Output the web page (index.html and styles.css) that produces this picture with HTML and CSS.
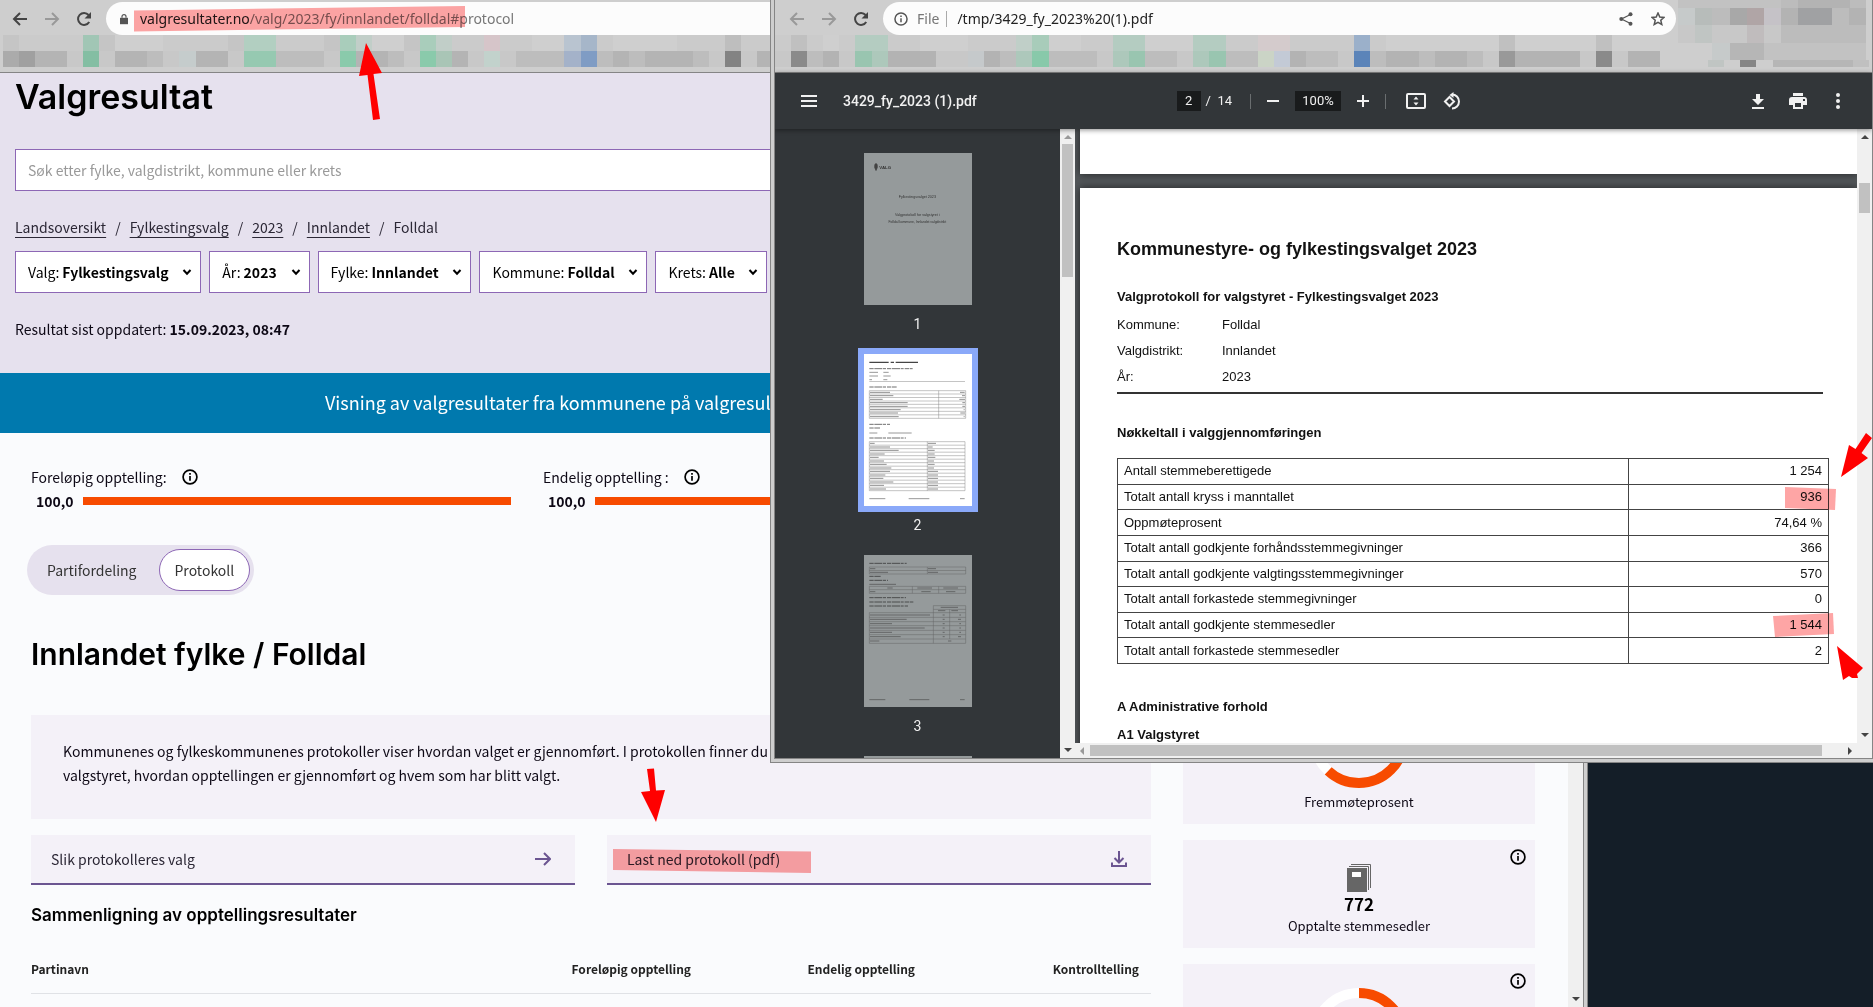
FILE: index.html
```html
<!DOCTYPE html>
<html lang="no">
<head>
<meta charset="utf-8">
<title>Valgresultat</title>
<link rel="stylesheet" href="styles.css">
</head>
<body>
<svg class="defs" width="0" height="0" aria-hidden="true">
  <symbol id="i-back" viewBox="0 0 16 16"><path d="M15 8H2M8 2L2 8l6 6" fill="none" stroke="currentColor" stroke-width="2"/></symbol>
  <symbol id="i-fwd" viewBox="0 0 16 16"><path d="M1 8h13M8 2l6 6-6 6" fill="none" stroke="currentColor" stroke-width="2"/></symbol>
  <symbol id="i-reload" viewBox="0 0 16 16"><path d="M13.2 11A6 6 0 1 1 12.6 4" fill="none" stroke="currentColor" stroke-width="2"/><path d="M15 1v6.5H8.500z" fill="currentColor"/></symbol>
  <symbol id="i-info" viewBox="0 0 16 16"><circle cx="8" cy="8" r="6.900" fill="none" stroke="currentColor" stroke-width="1.700"/><path d="M8 7v4.800M8 4v1.800" stroke="currentColor" stroke-width="1.700"/></symbol>
  <symbol id="i-chev" viewBox="0 0 10 8"><path d="M1.500 2L5 5.800 8.500 2" fill="none" stroke="currentColor" stroke-width="2"/></symbol>
  <symbol id="i-up" viewBox="0 0 8 4"><path d="M0 4l4-4 4 4z" fill="currentColor"/></symbol>
  <symbol id="i-down" viewBox="0 0 8 4"><path d="M0 0l4 4 4-4z" fill="currentColor"/></symbol>
  <symbol id="i-left" viewBox="0 0 4 8"><path d="M4 0L0 4l4 4z" fill="currentColor"/></symbol>
  <symbol id="i-right" viewBox="0 0 4 8"><path d="M0 0l4 4-4 4z" fill="currentColor"/></symbol>
</svg>

<div class="desktop">
  <section class="window window-main" aria-label="Valgresultat">
    <div class="window-inner">
      <div class="chrome">
        <div class="nav">
          <button class="nav-btn" aria-label="Tilbake"><svg><use href="#i-back"/></svg></button>
          <button class="nav-btn dim" aria-label="Frem"><svg><use href="#i-fwd"/></svg></button>
          <button class="nav-btn" aria-label="Last inn"><svg><use href="#i-reload"/></svg></button>
          <div class="url">
            <svg class="lock" viewBox="0 0 10 13"><path d="M0 5h10v8H0z" fill="#555"/><path d="M2.500 5V3.500a2.500 2.500 0 0 1 5 0V5" fill="none" stroke="#555" stroke-width="1.500"/></svg>
            <span class="url-text"><span class="host">valgresultater.no</span>/valg/2023/fy/innlandet/folldal#protocol</span>
          </div>
        </div>
        <svg class="strip strip-main" viewBox="0 0 48 2" preserveAspectRatio="none" shape-rendering="crispEdges" aria-hidden="true">
          <path fill="#cbcbcb" d="M0 0h48v1H0z"/><path fill="#bdbdbd" d="M0 1h48v1H0z"/>
          <path fill="#c5c5c5" d="M0 0h1v1H0zM6 0h1v1H6zM14 0h1v1h-1zM20 0h1v1h-1zM25 0h1v1h-1z"/>
          <path fill="#cfcfcf" d="M7 0h3v1H7zM23 0h2v1h-2zM33 0h2v1h-2zM38 0h4v1h-4z"/>
          <path fill="#a1c6b5" d="M5 0h1v1H5z"/><path fill="#b2cfc1" d="M15 0h2v1h-2z"/><path fill="#a9cdbb" d="M21 0h1v1h-1zM26 0h1v1h-1z"/><path fill="#c1cec8" d="M22 0h1v1h-1zM27 0h1v1h-1z"/>
          <path fill="#d6c5c9" d="M30 0h1v1h-1z"/><path fill="#b9c4d0" d="M35 0h1v1h-1z"/><path fill="#a6b6c9" d="M36 0h1v1h-1z"/><path fill="#bebebe" d="M45 0h1v1h-1z"/>
          <path fill="#ababab" d="M0 1h1v1H0z"/><path fill="#a0a0a0" d="M1 1h1v1H1z"/>
          <path fill="#b4b4b4" d="M2 1h2v1H2zM7 1h2v1H7zM12 1h2v1h-2zM22 1h2v1h-2zM28 1h1v1h-1zM38 1h1v1h-1zM40 1h3v1h-3zM47 1h1v1h-1z"/>
          <path fill="#c8c8c8" d="M4 1h1v1H4zM6 1h1v1H6zM10 1h1v1h-1zM14 1h1v1h-1zM20 1h1v1h-1zM25 1h1v1h-1zM29 1h1v1h-1zM31 1h1v1h-1zM44 1h1v1h-1zM46 1h1v1h-1z"/>
          <path fill="#84bea3" d="M5 1h1v1H5z"/><path fill="#c5cccc" d="M11 1h1v1h-1z"/><path fill="#96c9b1" d="M15 1h2v1h-2z"/><path fill="#8acaab" d="M21 1h1v1h-1zM26 1h1v1h-1z"/><path fill="#a9c5b6" d="M27 1h1v1h-1z"/><path fill="#c2d2cc" d="M30 1h1v1h-1z"/>
          <path fill="#a4b2c9" d="M35 1h1v1h-1z"/><path fill="#7f9cc4" d="M36 1h1v1h-1z"/><path fill="#838383" d="M45 1h1v1h-1z"/>
        </svg>
      </div>
      <div class="viewport">
        <div class="page">
          <header class="hero">
            <h1>Valgresultat</h1>
            <input class="search" type="search" aria-label="Søk" placeholder="Søk etter fylke, valgdistrikt, kommune eller krets">
            <nav class="crumbs" aria-label="Brødsmuler">
              <a href="#">Landsoversikt</a><span>/</span><a href="#">Fylkestingsvalg</a><span>/</span><a href="#">2023</a><span>/</span><a href="#">Innlandet</a><span>/</span><span>Folldal</span>
            </nav>
            <div class="filters">
              <label class="filter">Valg:<select><option>Fylkestingsvalg</option></select><svg><use href="#i-chev"/></svg></label>
              <label class="filter">År:<select><option>2023</option></select><svg><use href="#i-chev"/></svg></label>
              <label class="filter">Fylke:<select><option>Innlandet</option></select><svg><use href="#i-chev"/></svg></label>
              <label class="filter">Kommune:<select><option>Folldal</option></select><svg><use href="#i-chev"/></svg></label>
              <label class="filter">Krets:<select><option>Alle</option></select><svg><use href="#i-chev"/></svg></label>
            </div>
            <p class="updated">Resultat sist oppdatert: <b>15.09.2023, 08:47</b></p>
          </header>
          <div class="banner">Visning av valgresultater fra kommunene på valgresultater.no</div>
          <main class="main">
            <div class="progress-row">
              <div class="progress"><div class="progress-label">Foreløpig opptelling: <svg class="info"><use href="#i-info"/></svg></div><div class="progress-line"><b>100,0</b><div class="bar"></div></div></div>
              <div class="progress"><div class="progress-label">Endelig opptelling : <svg class="info"><use href="#i-info"/></svg></div><div class="progress-line"><b>100,0</b><div class="bar"></div></div></div>
            </div>
            <div class="columns">
              <div class="content">
                <div class="tabs"><button class="tab">Partifordeling</button><button class="tab active">Protokoll</button></div>
                <h2>Innlandet fylke / Folldal</h2>
                <p class="intro">Kommunenes og fylkeskommunenes protokoller viser hvordan valget er gjennomført. I protokollen finner du<br>valgstyret, hvordan opptellingen er gjennomført og hvem som har blitt valgt.</p>
                <div class="links">
                  <a class="link-card" href="#">Slik protokolleres valg<svg viewBox="0 0 16 16"><path d="M0 8h14M9 2l6 6-6 6" fill="none" stroke="#6b5591" stroke-width="2"/></svg></a>
                  <a class="link-card" href="#">Last ned protokoll (pdf)<svg viewBox="0 0 16 16"><path d="M8 0v11M3.500 7L8 11.500 12.500 7M1 11.500V15h14v-3.500" fill="none" stroke="#6b5591" stroke-width="2"/></svg></a>
                </div>
                <h3>Sammenligning av opptellingsresultater</h3>
                <table class="results">
                  <thead><tr><th>Partinavn</th><th>Foreløpig opptelling</th><th>Endelig opptelling</th><th>Kontrolltelling</th></tr></thead>
                </table>
              </div>
              <aside class="cards">
                <div class="card">
                  <svg class="donut" viewBox="0 0 100 100"><circle cx="50" cy="50" r="45" fill="none" stroke="#fff" stroke-width="10"/><circle cx="50" cy="50" r="45" fill="none" stroke="#f74b00" stroke-width="10" pathLength="100" stroke-dasharray="62 38" transform="rotate(-90 50 50)"/></svg>
                  <span class="card-label spaced">Fremmøteprosent</span>
                </div>
                <div class="card">
                  <svg class="info corner"><use href="#i-info"/></svg>
                  <svg class="books" viewBox="0 0 24 28"><path d="M4 .5h19.500V24M2 2.500h19.500V26" fill="none" stroke="#666"/><path d="M0 4h20v24H0z" fill="#666"/><path d="M5 8h9v5H5z" fill="#fff"/></svg>
                  <b class="card-number">772</b>
                  <span class="card-label">Opptalte stemmesedler</span>
                </div>
                <div class="card">
                  <svg class="info corner"><use href="#i-info"/></svg>
                  <svg class="donut" viewBox="0 0 100 100"><circle cx="50" cy="50" r="45" fill="none" stroke="#fff" stroke-width="10"/><circle cx="50" cy="50" r="45" fill="none" stroke="#f74b00" stroke-width="10" pathLength="100" stroke-dasharray="62 38" transform="rotate(-90 50 50)"/></svg>
                </div>
              </aside>
            </div>
          </main>
        </div>
        <div class="vbar vbar-main"><svg class="tri"><use href="#i-down"/></svg></div>
      </div>
    </div>
  </section>

  <section class="window window-pdf" aria-label="PDF">
    <div class="window-inner">
      <div class="chrome chrome-pdf">
        <div class="chrome-left">
          <div class="nav">
            <button class="nav-btn dim" aria-label="Tilbake"><svg><use href="#i-back"/></svg></button>
            <button class="nav-btn dim" aria-label="Frem"><svg><use href="#i-fwd"/></svg></button>
            <button class="nav-btn" aria-label="Last inn"><svg><use href="#i-reload"/></svg></button>
            <div class="url url-pdf">
              <svg class="url-info"><use href="#i-info"/></svg><span class="scheme">File</span><span class="host">/tmp/3429_fy_2023%20(1).pdf</span>
              <span class="url-actions">
                <svg viewBox="0 0 14 14"><path d="M11.500 2.500L2.500 7l9 4.500" fill="none" stroke="#555" stroke-width="1.300"/><circle cx="11.500" cy="2.200" r="2" fill="#555"/><circle cx="2.300" cy="7" r="2" fill="#555"/><circle cx="11.500" cy="11.800" r="2" fill="#555"/></svg>
                <svg viewBox="0 0 14 14"><path d="M7 1l1.800 4 4.200.4-3.200 2.900 1 4.200L7 10.300l-3.800 2.200 1-4.200L1 5.400 5.200 5z" fill="none" stroke="#555" stroke-width="1.500"/></svg>
              </span>
            </div>
          </div>
          <svg class="strip strip-pdf" viewBox="0 0 55 2" preserveAspectRatio="none" shape-rendering="crispEdges" aria-hidden="true">
            <path fill="#cbcbcb" d="M0 0h55v1H0z"/><path fill="#bdbdbd" d="M0 1h55v1H0z"/>
            <path fill="#cfcfcf" d="M3 0h1v1H3zM9 0h3v1H9zM17 0h2v1h-2zM23 0h3v1h-3zM38 0h7v1h-7zM46 0h5v1h-5zM52 0h3v1h-3z"/>
            <path fill="#c0c0c0" d="M1 0h1v1H1zM45 0h1v1h-1zM51 0h1v1h-1z"/>
            <path fill="#b4ccc1" d="M5 0h2v1H5zM21 0h2v1h-2zM26 0h2v1h-2z"/><path fill="#c0cfc8" d="M15 0h1v1h-1z"/><path fill="#a8ccba" d="M16 0h1v1h-1z"/><path fill="#d4cbcc" d="M30 0h2v1h-2z"/><path fill="#9bb0ca" d="M36 0h1v1h-1z"/>
            <path fill="#c8c8c8" d="M0 1h1v1H0zM4 1h1v1H4zM10 1h2v1h-2zM20 1h1v1h-1zM25 1h1v1h-1zM35 1h1v1h-1zM44 1h1v1h-1zM50 1h1v1h-1zM52 1h1v1h-1z"/>
            <path fill="#8a8a8a" d="M1 1h1v1H1zM51 1h1v1h-1z"/><path fill="#999" d="M45 1h1v1h-1z"/>
            <path fill="#b3b3b3" d="M3 1h1v1H3zM7 1h3v1H7zM13 1h1v1h-1zM32 1h1v1h-1zM38 1h2v1h-2zM41 1h2v1h-2zM46 1h4v1h-4zM53 1h2v1h-2z"/>
            <path fill="#99c5b0" d="M5 1h1v1H5zM22 1h1v1h-1zM27 1h1v1h-1z"/><path fill="#adc8bb" d="M6 1h1v1H6zM15 1h1v1h-1zM21 1h1v1h-1zM26 1h1v1h-1z"/><path fill="#88c9aa" d="M16 1h1v1h-1z"/><path fill="#c5c9cb" d="M12 1h1v1h-1z"/><path fill="#cbd4c6" d="M30 1h1v1h-1z"/><path fill="#c3cad6" d="M31 1h1v1h-1z"/><path fill="#5b84b9" d="M36 1h1v1h-1z"/>
          </svg>
        </div>
        <svg class="blocks" viewBox="0 0 195 68" shape-rendering="crispEdges" aria-hidden="true">
          <path fill="#c2c2c2" d="M1 0h103v8H1zM69 43h120v17H69z"/><path fill="#b3b3b3" d="M121 0h52v8h-52zM104 8h17v17h-17zM172 8h17v17h-17z"/><path fill="#bcbcbc" d="M104 0h17v8h-17zM173 0h16v8h-16zM35 8h18v17H35zM155 8h17v17h-17zM104 25h85v18h-85z"/>
          <path fill="#c6caca" d="M1 8h17v17H1zM35 43h18v17H35z"/><path fill="#b7bcba" d="M18 8h17v17H18z"/><path fill="#a8a8a8" d="M53 8h17v17H53z"/><path fill="#b0a5a6" d="M70 8h17v17H70z"/><path fill="#c5c2c7" d="M87 8h17v17H87z"/><path fill="#a0a1a3" d="M121 8h34v17h-34z"/>
          <path fill="#c8c8c8" d="M1 25h17v18H1zM35 25h35v18H35zM87 25h17v18H87z"/><path fill="#c0c5c3" d="M18 25h17v18H18zM31 60h16v7H31z"/><path fill="#c0bcbd" d="M70 25h17v18H70z"/><path fill="#b6b6b6" d="M53 43h34v17H53zM96 60h80v7H96z"/><path fill="#858585" d="M63 60h16v7H63z"/><path fill="#c0c0c0" d="M176 60h16v7h-16z"/>
        </svg>
      </div>
      <div class="pdf-bar">
        <button class="icon-btn menu" aria-label="Meny"><svg viewBox="0 0 16 12"><path d="M0 1h16M0 6h16M0 11h16" stroke="#f1f1f1" stroke-width="2"/></svg></button>
        <span class="pdf-title">3429_fy_2023 (1).pdf</span>
        <div class="pdf-tools">
          <input class="field pageno" type="text" value="2" aria-label="Side"><span class="pages">/&nbsp; 14</span>
          <i class="sep"></i>
          <button class="icon-btn" aria-label="Zoom ut"><svg width="12" height="12" viewBox="0 0 12 12"><path d="M0 6h12" stroke="#f1f1f1" stroke-width="2"/></svg></button>
          <input class="field zoomlevel" type="text" value="100%" aria-label="Zoom">
          <button class="icon-btn" aria-label="Zoom inn"><svg width="12" height="12" viewBox="0 0 12 12"><path d="M0 6h12M6 0v12" stroke="#f1f1f1" stroke-width="2"/></svg></button>
          <i class="sep"></i>
          <button class="icon-btn fit" aria-label="Tilpass"><svg width="20" height="16" viewBox="0 0 20 16"><rect x="1" y="1" width="18" height="14" rx="1" fill="none" stroke="#f1f1f1" stroke-width="2"/><path d="M10 3.500l2.500 3h-5zM10 12.500l2.500-3h-5z" fill="#f1f1f1"/></svg></button>
          <button class="icon-btn" aria-label="Roter"><svg width="20" height="18" viewBox="0 0 20 18"><path d="M6.500 5l4.500 4.500L6.500 14 2 9.500z" fill="none" stroke="#f1f1f1" stroke-width="2"/><path d="M9 2.500a7 7 0 1 1 0 14" fill="none" stroke="#f1f1f1" stroke-width="2"/><path d="M10.500 0v6L6.500 3z" fill="#f1f1f1"/></svg></button>
        </div>
        <div class="pdf-actions">
          <button class="icon-btn" aria-label="Last ned"><svg width="12" height="15" viewBox="0 0 12 15"><path d="M4 0h4v5h4l-6 6-6-6h4zM0 13h12v2H0z" fill="#f1f1f1"/></svg></button>
          <button class="icon-btn" aria-label="Skriv ut"><svg width="18" height="16" viewBox="0 0 18 16"><path d="M4 0h10v3H4zM3 4h12a3 3 0 0 1 3 3v5h-4v4H4v-4H0V7a3 3 0 0 1 3-3zm3 6v4h6v-4zM14 6v2h2V6z" fill="#f1f1f1" fill-rule="evenodd"/></svg></button>
          <button class="icon-btn" aria-label="Mer"><svg width="4" height="16" viewBox="0 0 4 16"><g fill="#f1f1f1"><circle cx="2" cy="2" r="2"/><circle cx="2" cy="8" r="2"/><circle cx="2" cy="14" r="2"/></g></svg></button>
        </div>
      </div>
      <div class="pdf-body">
        <div class="thumbs">
          <figure class="thumb">
            <svg viewBox="0 0 324 456"><rect width="324" height="456" fill="#959a9b"/><path d="M32 37c0-6 8-6 8 0v7l-4 8-4-8zM36 31v22" fill="#444" stroke="#444" stroke-width="2"/><g fill="#333" font-family="Liberation Sans, sans-serif" font-size="11"><text x="46" y="49" font-weight="bold" font-size="13">VALG</text><text x="160" y="134" text-anchor="middle">Fylkestingsvalget 2023</text><text x="160" y="189" text-anchor="middle">Valgprotokoll for valgstyret i</text><text x="160" y="210" text-anchor="middle" font-size="10">Folldal kommune, Innlandet valgdistrikt</text></g></svg>
            <figcaption>1</figcaption>
          </figure>
          <figure class="thumb current">
            <svg viewBox="0 0 324 456"><rect width="324" height="456" fill="#fff"/>
              <path d="M16 25h146" stroke="#444" stroke-width="4" stroke-dasharray="58 6 10 5 67 0"/>
              <path d="M16 44h130M16 99h82M16 211h62M16 222h32M16 252h110" stroke="#333" stroke-width="3" stroke-dasharray="13 2 24 2 9 3" opacity=".7"/>
              <path d="M16 55h26M58 55h16M16 66h26M58 66h22M16 77h8M58 77h12M16 237h24M73 237h70M16 434h48M134 434h62M288 434h14" stroke="#555" stroke-width="3" opacity=".6"/>
              <path d="M16 82.500h287M16 110h289v83H16zM224 110v83M16 120h289M16 130.500h289M16 141h289M16 151h289M16 161.500h289M16 172h289M16 182.500h289" stroke="#888" fill="none" stroke-width="1.500"/>
              <path d="M18 115h60M18 125h70M18 136h38M18 146h113M18 157h113M18 167h92M18 177h84M18 188h86M288 115h14M294 125h9M286 136h17M295 146h8M295 157h8M299 167h3M289 177h14M299 188h3" stroke="#444" stroke-width="3" opacity=".6"/>
              <path d="M16 263h287v147H16zM190 263v147M16 273.500h287M16 284h287M16 294.500h287M16 305h287M16 315.500h287M16 326h287M16 336.500h287M16 347h287M16 357.500h287M16 368h287M16 378.500h287M16 389h287M16 399.500h287" stroke="#888" fill="none" stroke-width="1.500"/>
              <path d="M18 268h14M18 279h60M18 289h86M18 300h44M18 310h26M18 321h42M18 331h50M18 342h64M18 352h60M18 363h46M18 373h40M18 384h70M18 394h42M18 405h48M192 268h24M192 279h14M192 289h20M192 300h20M192 310h22M192 321h18M192 331h20M192 342h18M192 352h30M192 363h30M192 373h30M192 384h30M192 394h30M192 405h30" stroke="#444" stroke-width="3" opacity=".6"/></svg>
            <figcaption>2</figcaption>
          </figure>
          <figure class="thumb">
            <svg viewBox="0 0 324 456"><rect width="324" height="456" fill="#959a9b"/>
              <g opacity=".75"><path d="M16 25h112M16 64h34M16 76h56M16 128h110M16 141h132M16 153h116" stroke="#333" stroke-width="3" stroke-dasharray="13 2 24 2 9 3"/>
              <path d="M16 88h80M16 434h48M136 434h60M288 434h14M18 41h16M18 52h54M192 41h24M192 52h30M70 99h16M160 99h44M238 99h44M18 110h16M172 110h28M246 110h28M230 157h52M222 167h22M262 167h20M18 180h180M18 193h110M18 206h66M18 219h164M18 232h66M18 245h92M18 258h28M236 180h6M286 180h5M236 193h6M282 193h9M236 206h6M286 206h5M236 219h6M286 219h5M236 232h6M286 232h5M236 245h6M282 245h9M252 258h10" stroke="#444" stroke-width="3" opacity=".8"/>
              <path d="M16 36h289v21H16zM190 36v21M16 46.500h289M16 94h289v21H16zM145 94v21M224 94v21M16 104h289M208 152h97v21M208 163h97M208 152v113M257 163v89M16 173h289v92H16zM16 187h289M16 200h289M16 212h289M16 226h289M16 239h289M16 252h289" stroke="#555" fill="none" stroke-width="1.500"/></g></svg>
            <figcaption>3</figcaption>
          </figure>
          <figure class="thumb"><svg viewBox="0 0 324 456"><rect width="324" height="456" fill="#959a9b"/></svg></figure>
        </div>
        <div class="vbar vbar-thumbs"><svg class="tri pale"><use href="#i-up"/></svg><i class="thumb-bar"></i><svg class="tri end"><use href="#i-down"/></svg></div>
        <div class="doc">
          <div class="doc-row">
            <div class="sheets">
              <div class="sheet sheet-prev"></div>
              <article class="sheet sheet-now">
                <h1 class="doc-title">Kommunestyre- og fylkestingsvalget 2023</h1>
                <h2 class="doc-h">Valgprotokoll for valgstyret - Fylkestingsvalget 2023</h2>
                <dl class="facts"><dt>Kommune:</dt><dd>Folldal</dd><dt>Valgdistrikt:</dt><dd>Innlandet</dd><dt>År:</dt><dd>2023</dd></dl>
                <h2 class="doc-h">Nøkkeltall i valggjennomføringen</h2>
                <table class="keys">
                  <tr><td>Antall stemmeberettigede</td><td>1 254</td></tr>
                  <tr><td>Totalt antall kryss i manntallet</td><td>936</td></tr>
                  <tr><td>Oppmøteprosent</td><td>74,64 %</td></tr>
                  <tr><td>Totalt antall godkjente forhåndsstemmegivninger</td><td>366</td></tr>
                  <tr><td>Totalt antall godkjente valgtingsstemmegivninger</td><td>570</td></tr>
                  <tr><td>Totalt antall forkastede stemmegivninger</td><td>0</td></tr>
                  <tr><td>Totalt antall godkjente stemmesedler</td><td>1 544</td></tr>
                  <tr><td>Totalt antall forkastede stemmesedler</td><td>2</td></tr>
                </table>
                <h2 class="doc-h">A Administrative forhold</h2>
                <h2 class="doc-h">A1 Valgstyret</h2>
              </article>
            </div>
            <div class="vbar vbar-doc"><svg class="tri"><use href="#i-up"/></svg><i class="thumb-bar"></i><svg class="tri end"><use href="#i-down"/></svg></div>
          </div>
          <div class="hbar"><svg class="tri-h pale"><use href="#i-left"/></svg><i class="hthumb"></i><svg class="tri-h"><use href="#i-right"/></svg></div>
        </div>
      </div>
    </div>
  </section>

  <svg class="marks marker-pen" width="1873" height="1007" viewBox="0 0 1873 1007" aria-hidden="true">
    <g fill="#fea5a5"><path d="M134 10.500L465 6v21l-331 4.500z"/><path d="M613 849l198 2.500v21.500l-198-3z"/><path d="M1785 487l51 2-1 21-50-2z"/><path d="M1773 616l60-3 1 21-59 3z"/></g>
  </svg>
  <svg class="marks" width="1873" height="1007" viewBox="0 0 1873 1007" aria-hidden="true">
    <g fill="#f00"><path d="M366 43l16 30-8.500 1 6.500 45-7 1-5.500-45-8.500 1z"/><path d="M656 822l-15-30 9-1-3-22 7-.5 2 22 9-.5z"/><path d="M1841 477l8-32 6.500 4 10.500-16 6 5-10.500 15 6.500 5z"/><path d="M1837 646l26 22-6 6 1 4h-6l-3-2-6 4z"/></g>
  </svg>
</div>
</body>
</html>
```
FILE: styles.css
```css
* { box-sizing: border-box; }
body { margin: 0; }
h1, h2, h3, p, figure, dl, dd { margin: 0; }
button, select, input { font: inherit; color: inherit; }
button { border: 0; background: none; padding: 0; cursor: pointer; }
svg { display: block; flex: none; }
.defs { position: absolute; }

.desktop {
  position: relative;
  height: 100vh;
  overflow: hidden;
  background: #141e28;
  font-family: "Noto Sans CJK SC", "Noto Sans", sans-serif;
  color: #0d0815;
}

/* window frames */
.window { position: absolute; top: 0; background: #cecece; }
.window-inner { height: 100%; display: flex; flex-direction: column; overflow: hidden; }
.window-main { left: 0; right: 285px; bottom: 0; border-right: 1px solid #858585; padding-right: 3px; }
.window-main > .window-inner { border-right: 1px solid #858585; }
.window-pdf { left: 770px; right: 0; bottom: 244px; border: solid #858585; border-width: 0 0 1px 1px; padding: 0 0 3px 3px; }
.window-pdf > .window-inner { border: solid #858585; border-width: 0 1px 1px; }

/* browser chrome */
.chrome { flex: none; height: 73px; border-bottom: 1px solid #858585; background: #cecece; }
.chrome-pdf { display: grid; grid-template-columns: 1fr 195px; }
.nav { display: flex; align-items: center; padding-top: 2px; height: 35px; }
.nav-btn { width: 32px; height: 32px; display: grid; place-items: center; color: #444; }
.nav-btn:first-child { margin-left: 4px; }
.chrome-pdf .nav-btn:first-child { margin-left: 6px; }
.nav-btn svg { width: 16px; height: 16px; }
.nav-btn.dim { color: #999; }
.url { flex: 1; height: 33px; margin-left: 6px; padding: 0 0 0 14px; display: flex; align-items: center; border-radius: 17px; background: #fcfcfc; font: 14px/20px "Noto Sans", sans-serif; color: #777; white-space: nowrap; }
.url-pdf { margin-right: 1px; padding-left: 11px; }
.lock { width: 8px; height: 12px; margin: 0 12px 0 0; }
.host { color: #222; }
.url-info { width: 14px; height: 14px; color: #555; }
.scheme { margin: 0 10px 0 9px; padding-right: 7px; border-right: 1px solid #aaa; line-height: 16px; }
.url-actions { display: flex; gap: 18px; margin-left: auto; padding-right: 11px; }
.url-actions svg { width: 14px; height: 14px; }
.strip { height: 32px; }
.strip-main { width: 770px; margin-left: 3px; }
.strip-pdf { width: 885px; }
.blocks { width: 195px; height: 68px; }

/* scroll bars */
.vbar { flex: none; width: 15px; background: #f0f0f0; display: flex; flex-direction: column; align-items: center; padding: 6px 0; color: #444; }
.tri { width: 8px; height: 4px; }
.tri.end { margin-top: auto; }
.pale { color: #999; }
.vbar-main { justify-content: flex-end; }
.thumb-bar { width: 11px; background: #c1c1c1; }
.vbar-thumbs .thumb-bar { height: 133px; margin-top: 5px; }
.vbar-doc .thumb-bar { height: 30px; margin-top: 44px; }
.hbar { flex: none; height: 15px; background: #f0f0f0; display: flex; align-items: center; padding: 0 20px 0 5px; color: #444; }
.tri-h { width: 4px; height: 8px; }
.hthumb { flex: 1; height: 11px; margin: 0 26px 0 6px; background: #c1c1c1; }

/* election page */
.viewport { flex: 1; min-height: 0; display: flex; }
.page { flex: 1; min-width: 0; overflow: hidden; background: #fafbfd; font-size: 14px; line-height: 24px; }
.hero { background: #e6e1ee; padding: 2px 15px 32px; }
.hero h1 { font: 600 34px/44px Inter, sans-serif; color: #000; }
.search { display: block; width: 100%; height: 42px; margin-top: 30px; padding: 0 12px; border: 1px solid #8d67b5; border-radius: 0; background: #fff; appearance: none; }
.search::placeholder { color: #999; }
.crumbs { display: flex; gap: 9px; margin-top: 24px; color: #2b2735; }
.crumbs a { color: inherit; text-underline-offset: 4px; }
.filters { display: flex; gap: 8px; margin-top: 12px; color: #000; }
.filter { display: flex; align-items: center; height: 42px; padding: 0 8px 0 12px; border: 1px solid #8d67b5; background: #fff; }
.filter select { appearance: none; border: 0; padding: 0; margin: 0 13px 0 3px; background: none; font-weight: bold; }
.filter svg { width: 10px; height: 8px; }
.updated { margin-top: 24px; }
.banner { padding: 13px 0 15px 325px; background: #0079ae; color: #fff; font-size: 18px; line-height: 32px; white-space: nowrap; overflow: hidden; }
.main { padding: 32px 33px 0 31px; }
.progress-row { display: grid; grid-template-columns: repeat(3, 1fr); gap: 32px; }
.progress-label { display: flex; align-items: center; gap: 15px; }
.info { width: 16px; height: 16px; color: #000; }
.progress-line { display: flex; align-items: center; gap: 9px; padding-left: 5px; }
.bar { flex: 1; height: 8px; background: #f74b00; }
.columns { display: grid; grid-template-columns: 1fr 352px; gap: 32px; margin-top: 32px; }
.tabs { display: inline-flex; align-items: center; height: 50px; margin-left: -4px; padding: 4px; border-radius: 25px; background: #e6e1ee; color: #333; vertical-align: top; }
.tab { height: 42px; padding: 0 15px; border: 1px solid transparent; border-radius: 21px; }
.tab.active { background: #fff; border-color: #8d67b5; margin-left: 6px; }
.content h2 { margin: 41px 0 43px; font: 600 30px/36px Inter, sans-serif; color: #000; }
.intro { padding: 24px 32px 32px; background: #f4f1f8; white-space: nowrap; }
.links { display: grid; grid-template-columns: 1fr 1fr; gap: 32px; margin-top: 16px; }
.link-card { display: flex; align-items: center; justify-content: space-between; height: 50px; padding: 0 24px 0 20px; border-bottom: 2px solid #6b5591; background: #f4f1f8; color: #2b2735; text-decoration: none; }
.link-card svg { width: 16px; height: 16px; }
.content h3 { margin: 18px 0; font: 600 17px/24px Inter, sans-serif; color: #000; }
.results { width: 100%; table-layout: fixed; border-collapse: collapse; }
.results th { height: 48px; padding: 0 12px 0 0; border-bottom: 1px solid #e0e2e6; text-align: right; font-size: 12px; color: #222; }
.results th:first-child { width: 40%; text-align: left; }
.cards { display: flex; flex-direction: column; gap: 16px; margin-top: 119px; }
.card { position: relative; display: flex; flex-direction: column; align-items: center; padding: 24px 0 12px; background: #f4f1f8; font-size: 13px; line-height: 20px; }
.donut { width: 100px; height: 100px; }
.spaced { margin-top: 4px; }
.corner { position: absolute; top: 9px; right: 9px; }
.books { width: 24px; height: 28px; }
.card-number { font-size: 17px; line-height: 24px; color: #000; }

/* pdf viewer */
.pdf-bar { position: relative; z-index: 1; flex: none; height: 56px; display: grid; grid-template-columns: auto 1fr auto auto; align-items: center; padding: 0 32px 0 26px; background: #323639; box-shadow: 0 1px 5px rgba(0, 0, 0, .45); color: #f1f1f1; font: 13px/20px Roboto, sans-serif; }
.menu svg { width: 16px; height: 12px; }
.pdf-title { padding-left: 26px; font-size: 14px; font-weight: 500; }
.pdf-tools { display: flex; align-items: center; margin-right: 289px; }
.field { border: 0; height: 20px; padding: 0; background: #191b1c; color: #f1f1f1; text-align: center; border-radius: 0; }
.pageno { width: 24px; }
.pages { padding-left: 5px; }
.zoomlevel { width: 46px; margin: 0 16px; }
.sep { width: 1px; height: 15px; margin: 0 16px 0 18px; background: #6a6e70; }
.icon-btn + .sep { margin: 0 20px 0 16px; }
.icon-btn + .icon-btn { margin-left: 17px; }
.pdf-actions { display: flex; align-items: center; gap: 25px; }
.pdf-actions .icon-btn + .icon-btn { margin-left: 0; }
.pdf-actions .icon-btn:last-child { margin-left: 4px; }
.pdf-body { flex: 1; min-height: 0; display: grid; grid-template-columns: 285px 15px 1fr; }
.thumbs { overflow: hidden; min-height: 0; padding-top: 24px; background: #323639; color: #f1f1f1; font: 14px/20px Roboto, sans-serif; }
.thumb { display: flex; flex-direction: column; align-items: center; height: 201px; }
.thumb svg { width: 108px; height: 152px; }
.thumb.current svg { outline: 6px solid #8aa9f9; }
.thumb figcaption { margin-top: 9px; }
.doc { min-width: 0; min-height: 0; display: flex; flex-direction: column; background: #525659; }
.doc-row { flex: 1; min-height: 0; display: flex; }
.sheets { flex: 1; min-width: 0; overflow: hidden; padding-left: 5px; }
.sheet { background: #fff; box-shadow: 0 0 8px rgba(0, 0, 0, .6); }
.sheet-prev { height: 45px; }
.sheet-now { height: 700px; margin-top: 14px; padding: 49px 28px 0 37px; color: #111; font: 13px/16px "Liberation Sans", Arial, sans-serif; }
.doc-title { font-size: 18px; line-height: 24px; }
.doc-h { font-size: 13px; line-height: 16px; }
.doc-title + .doc-h { margin-top: 28px; }
.facts { display: grid; grid-template-columns: 105px 1fr; row-gap: 10px; margin: 12px 6px 31px 0; padding-bottom: 7px; border-bottom: 2px solid #333; }
.keys { width: 100%; height: 206px; margin: 17px 0 35px; border-collapse: collapse; table-layout: fixed; }
.keys td { padding: 0 6px; border: 1px solid #444; }
.keys td:last-child { width: 200px; text-align: right; }
.keys ~ .doc-h + .doc-h { margin-top: 12px; }

.marks { position: absolute; left: 0; top: 0; pointer-events: none; }
.marker-pen { mix-blend-mode: multiply; }
```
